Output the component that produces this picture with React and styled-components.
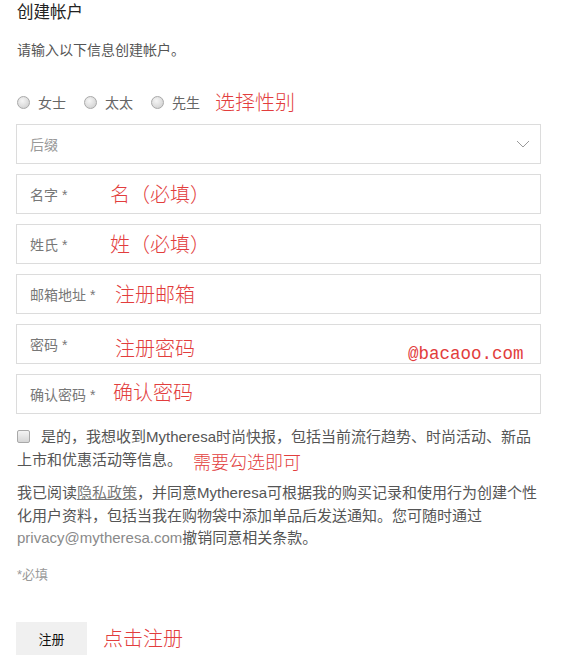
import React from "react";
import styled, { createGlobalStyle } from "styled-components";

const Global = createGlobalStyle`
  html, body { margin: 0; padding: 0; background: #fff; }
  body {
    font-family: "Liberation Sans", "Noto Sans CJK SC", sans-serif;
    color: #555;
  }
`;

const Page = styled.div`
  width: 586px;
  padding: 0 45px 0 16px;
  box-sizing: border-box;
  display: flex;
  flex-direction: column;
`;

const Title = styled.h1`
  margin: 0;
  padding-left: 1px;
  font-size: 16.5px;
  line-height: 24px;
  font-weight: 400;
  color: #222;
`;

const Intro = styled.p`
  margin: 14px 0 0;
  padding-left: 1px;
  font-size: 14px;
  line-height: 24px;
  color: #555;
`;

const Annot = styled.span`
  font-family: "Noto Sans CJK SC", sans-serif;
  font-size: ${(p) => p.$size || 20}px;
  font-weight: 300;
  line-height: 1;
  color: #e23d3d;
  white-space: nowrap;
`;

const OverAnnot = styled(Annot)`
  position: absolute;
  left: ${(p) => p.$left}px;
  top: ${(p) => p.$top}px;
`;

const Watermark = styled.span`
  position: absolute;
  left: ${(p) => p.$left}px;
  top: ${(p) => p.$top}px;
  font-family: "Liberation Mono", monospace;
  font-size: 17.5px;
  line-height: 1;
  color: #e23d3d;
  z-index: 2;
`;

const RadioRow = styled.div`
  display: flex;
  align-items: center;
  margin-top: 28px;
  height: 24px;
  padding-left: 1px;
`;

const RadioItem = styled.label`
  display: flex;
  align-items: center;
  gap: 8px;
  margin-right: 18px;
  font-size: 14px;
  color: #666;
`;

const RadioDot = styled.span`
  width: 11px;
  height: 11px;
  border-radius: 50%;
  border: 1px solid #a9a9a9;
  background: radial-gradient(circle at 40% 35%, #f6f6f6 0%, #dcdcdc 60%, #c9c9c9 100%);
`;

const Fields = styled.div`
  display: flex;
  flex-direction: column;
  gap: 10px;
  margin-top: 10px;
  position: relative;
`;

const Field = styled.div`
  position: relative;
  height: 40px;
  box-sizing: border-box;
  border: 1px solid #dcdcdc;
  display: flex;
  align-items: center;
  justify-content: space-between;
  padding: 0 10px 0 13px;
`;

const FieldLabel = styled.span`
  font-size: 14px;
  color: ${(p) => (p.$muted ? "#999" : "#777")};
`;

const Chevron = styled.svg`
  width: 14px;
  height: 8px;
`;

const Consent = styled.div`
  margin-top: 12px;
  position: relative;
  font-size: 15px;
  line-height: 22px;
  color: #555;
  padding-left: 1px;
  white-space: nowrap;
`;

const CheckBox = styled.span`
  display: inline-block;
  width: 11px;
  height: 11px;
  border: 1px solid #a9a9a9;
  border-radius: 2px;
  background: linear-gradient(#f4f4f4, #d6d6d6);
  vertical-align: -1px;
  margin-right: 11px;
`;

const Privacy = styled.p`
  margin: 11px 0 0;
  padding-left: 1px;
  font-size: 15px;
  line-height: 22.5px;
  color: #555;
  white-space: nowrap;
`;

const Link = styled.span`
  color: #777;
  text-decoration: underline;
`;

const Email = styled.span`
  color: #8a8a8a;
`;

const Required = styled.p`
  margin: 13px 0 0;
  padding-left: 1px;
  font-size: 13px;
  line-height: 24px;
  color: #999;
`;

const Actions = styled.div`
  display: flex;
  align-items: center;
  gap: 16px;
  margin-top: 35px;
`;

const Button = styled.button`
  width: 71px;
  height: 33px;
  border: none;
  background: #f0f0f0;
  font-family: "Liberation Sans", "Noto Sans CJK SC", sans-serif;
  font-size: 13px;
  color: #111;
  padding: 0;
`;

const InlineAnnot = styled(Annot)`
  position: relative;
  top: ${(p) => p.$drop || 0}px;
  margin-left: ${(p) => p.$gap || 0}px;
`;

const fields = [
  { label: "名字 *", note: "名（必填）", left: 93, top: 9 },
  { label: "姓氏 *", note: "姓（必填）", left: 93, top: 9 },
  { label: "邮箱地址 *", note: "注册邮箱", left: 98, top: 9 },
  { label: "密码 *", note: "注册密码", left: 98, top: 13 },
  { label: "确认密码 *", note: "确认密码", left: 96, top: 7 },
];

export default function App() {
  return (
    <>
      <Global />
      <Page>
        <Title>创建帐户</Title>
        <Intro>请输入以下信息创建帐户。</Intro>
        <RadioRow>
          <RadioItem><RadioDot />女士</RadioItem>
          <RadioItem><RadioDot />太太</RadioItem>
          <RadioItem><RadioDot />先生</RadioItem>
          <InlineAnnot $gap={-3}>选择性别</InlineAnnot>
        </RadioRow>
        <Fields>
          <Field>
            <FieldLabel $muted>后缀</FieldLabel>
            <Chevron viewBox="0 0 14 8">
              <polyline points="1,1 7,7 13,1" fill="none" stroke="#9a9a9a" strokeWidth="1" />
            </Chevron>
          </Field>
          {fields.map((f) => (
            <Field key={f.label}>
              <FieldLabel>{f.label}</FieldLabel>
              <OverAnnot $left={f.left} $top={f.top}>{f.note}</OverAnnot>
            </Field>
          ))}
          <Watermark $left={392} $top={222}>@bacaoo.com</Watermark>
        </Fields>
        <Consent>
          <CheckBox />是的，我想收到Mytheresa时尚快报，包括当前流行趋势、时尚活动、新品
          <br />
          上市和优惠活动等信息。
          <InlineAnnot $size={18} $gap={11} $drop={4}>需要勾选即可</InlineAnnot>
        </Consent>
        <Privacy>
          我已阅读<Link>隐私政策</Link>，并同意Mytheresa可根据我的购买记录和使用行为创建个性
          <br />
          化用户资料，包括当我在购物袋中添加单品后发送通知。您可随时通过
          <br />
          <Email>privacy@mytheresa.com</Email>撤销同意相关条款。
        </Privacy>
        <Required>*必填</Required>
        <Actions>
          <Button>注册</Button>
          <Annot>点击注册</Annot>
        </Actions>
      </Page>
    </>
  );
}
